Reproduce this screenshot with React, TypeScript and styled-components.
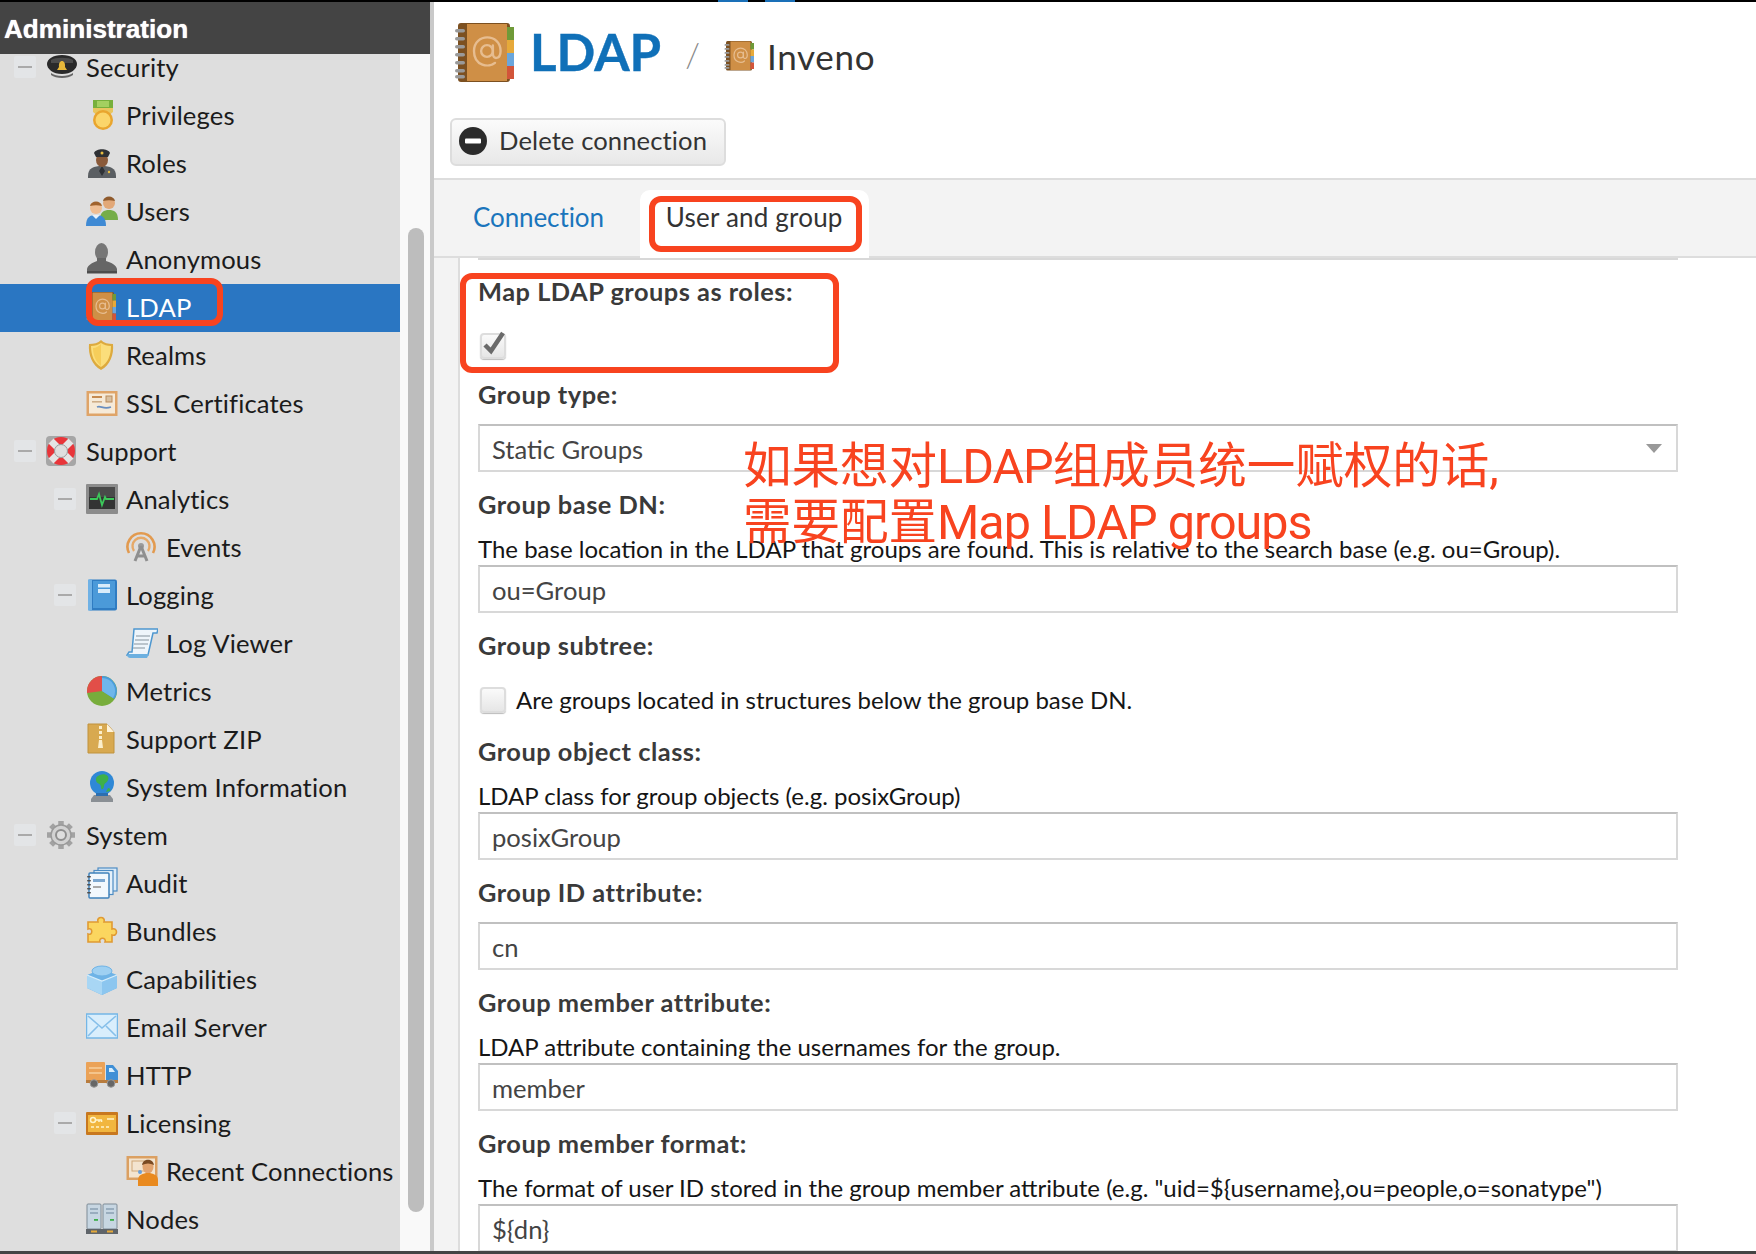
import React from "react";
import styled, { createGlobalStyle } from "styled-components";

const Global = createGlobalStyle`
  html, body { margin: 0; padding: 0; background: #fff; }
  * { box-sizing: border-box; }
`;
const FONT = `Lato, "Noto Sans", sans-serif`;
const RED = "#f8431f";

const Page = styled.div`
  position: relative; width: 1756px; height: 1254px; overflow: hidden;
  display: flex; flex-direction: column; font-family: ${FONT}; background: #fff;
`;
const TopBar = styled.div`
  height: 2px; flex: none; background: #000; display: flex; gap: 17px; padding-left: 718px;
`;
const TopMark = styled.span`
  display: block; width: 30px; height: 2px; background: #1a70b8;
`;
const BottomBar = styled.div`
  height: 3px; flex: none; background: #444;
`;
const Body = styled.div`
  flex: 1; min-height: 0; display: flex;
`;
const Side = styled.aside`
  width: 430px; flex: none; display: flex; flex-direction: column; min-height: 0;
`;
const SideHead = styled.div`
  height: 52px; flex: none; background: #444; color: #fff; padding-left: 4px;
  font: bold 26.1px/54px "Liberation Sans", sans-serif; text-shadow: 0 0 1px #fff;
`;
const SideBody = styled.div`
  flex: 1; min-height: 0; display: flex;
`;
const Tree = styled.div`
  width: 400px; flex: none; background: #dedede; overflow: hidden;
`;
const TreeInner = styled.div`
  margin-top: -10px;
`;
const Row = styled.div<{ $level: number; $sel?: boolean }>`
  height: 48px; display: flex; align-items: center; white-space: nowrap; padding-bottom: 2px;
  padding-left: ${(p) => 46 + (p.$level - 1) * 40}px;
  background: ${(p) => (p.$sel ? "#2a76c2" : "transparent")};
  color: ${(p) => (p.$sel ? "#fff" : "#1b1b1b")};
  font-size: 25.6px; letter-spacing: 0.15px;
`;
const Expander = styled.span`
  position: relative; width: 22px; height: 22px; margin-left: -32px; margin-right: 10px; flex: none;
  background: #e3e5e7; border-radius: 2px;
  &::after { content: ""; position: absolute; left: 4px; right: 4px; top: 10px; height: 2px; background: #aaa; }
`;
const IconSlot = styled.span`
  width: 32px; height: 32px; flex: none; margin-right: 8px; display: flex;
  svg { display: block; }
`;
const Track = styled.div`
  width: 30px; flex: none; background: #f9f9f9; padding: 174px 6px 0 8px;
`;
const Thumb = styled.div`
  height: 984px; background: #bdbdbd; border-radius: 8px;
`;
const Rule = styled.div`
  width: 4px; flex: none; background: #c9c9c9;
`;
const Main = styled.main`
  flex: 1; min-width: 0; display: flex; flex-direction: column; background: #fff;
`;
const TitleRow = styled.div`
  height: 116px; flex: none; display: flex; align-items: center; padding: 0 0 14px 20px;
`;
const Title = styled.h1`
  margin: 0 0 4px 12px; font: 700 51px/1 ${FONT}; color: #1070b8; letter-spacing: 0; -webkit-text-stroke: 0.4px #1070b8;
`;
const Slash = styled.span`
  margin: 0 24px 0 24px; font-size: 34px; color: #888; font-weight: 300;
`;
const SmallBook = styled.span`
  display: flex; margin-top: 6px;
`;
const Sub = styled.span`
  margin: 6px 0 0 11px; font-size: 35px; color: #333; letter-spacing: 0.7px;
`;
const Toolbar = styled.div`
  height: 60px; flex: none; padding-left: 16px;
`;
const Button = styled.div`
  width: 276px; height: 48px; display: flex; align-items: center; gap: 12px; padding: 0 0 3px 7px;
  border: 2px solid #ddd; border-radius: 6px; background: linear-gradient(#fbfbfb, #e8e8e8);
  font-size: 25.6px; color: #333; letter-spacing: 0.1px;
`;
const ButtonText = styled.span`
  margin-bottom: 2px;
`;
const TabBar = styled.div`
  height: 80px; flex: none; background: #f3f3f3; border-top: 2px solid #ddd; border-bottom: 2px solid #ddd;
  display: flex; padding: 10px 0 0 39px; gap: 36px;
`;
const Tab = styled.div<{ $active?: boolean }>`
  height: ${(p) => (p.$active ? 68 : 56)}px; padding: ${(p) => (p.$active ? "0 26px" : "0")};
  line-height: 54px; font-size: 26px; letter-spacing: ${(p) => (p.$active ? 0.2 : -0.1)}px;
  color: ${(p) => (p.$active ? "#333" : "#1a75bc")};
  background: ${(p) => (p.$active ? "#fff" : "transparent")};
  border-radius: 10px 10px 0 0; position: relative;
`;
const Content = styled.div`
  flex: 1; min-height: 0; display: flex; overflow: hidden;
`;
const Strip = styled.div`
  width: 26px; flex: none; background: #f3f3f3; border-right: 2px solid #ddd;
`;
const Form = styled.div`
  width: 1200px; flex: none; margin-left: 18px; border-top: 2px solid #d8d8d8;
`;
const Field = styled.div`
  margin-top: 19px; display: flex; flex-direction: column;
  &:first-child { margin-top: 18px; }
`;
const Label = styled.div`
  height: 30px; margin-bottom: 13px; line-height: 27px; font-size: 25.4px; letter-spacing: 0.5px; font-weight: 700; color: #3a3a3a; white-space: nowrap;
`;
const Help = styled.div`
  height: 30px; margin-bottom: 1px; line-height: 30px; font-size: 24px; color: #151515; white-space: nowrap;
`;
const Input = styled.div`
  position: relative; height: 48px; flex: none; padding-left: 12px; line-height: 46px;
  border: 2px solid #d8d8d8; border-top-color: #c0c0c0;
  font-size: 25.6px; color: #444; background: #fff;
`;
const Caret = styled.span`
  position: absolute; right: 14px; top: 18px; width: 0; height: 0;
  border-left: 8px solid transparent; border-right: 8px solid transparent; border-top: 9px solid #999;
`;
const CheckRow = styled.div<{ $top: number; $bottom: number }>`
  display: flex; align-items: center; gap: 10px; padding: ${(p) => p.$top}px 0 ${(p) => p.$bottom}px 2px;
  font-size: 24px; color: #151515;
`;
const Check = styled.span`
  position: relative; width: 26px; height: 26px; flex: none; border: 2px solid #ddd; border-radius: 4px;
  background: linear-gradient(#fafafa, #e6e6e6); box-shadow: 0 1px 1px #bbb;
  svg { position: absolute; left: -2px; top: -3px; overflow: visible; }
`;
const Frame = styled.div<{ $x: number; $y: number; $w: number; $h: number }>`
  position: absolute; left: ${(p) => p.$x}px; top: ${(p) => p.$y}px; width: ${(p) => p.$w}px; height: ${(p) => p.$h}px;
  border: 6px solid ${RED}; border-radius: 12px; pointer-events: none;
`;
const Note = styled.div`
  position: absolute; left: 743px; top: 439px; color: ${RED};
  font: 400 48.5px/56px Roboto, "Noto Sans CJK SC", sans-serif; white-space: nowrap;
`;
const NoteLatin = styled.span`
  letter-spacing: -1px;
`;

const W = ({ children }: { children: React.ReactNode }) => (
  <svg width="32" height="32" viewBox="0 0 32 32" fill="none">{children}</svg>
);

const At = ({ x, y, r, c }: { x: number; y: number; r: number; c: string }) => (
  <g fill="none" stroke={c} strokeWidth={r * 0.17} strokeLinecap="round">
    <circle cx={x} cy={y} r={r * 0.42} />
    <path d={`M${x + r * 0.42} ${y - r * 0.4}v${r * 0.6}c0 ${r * 0.45} ${r * 0.55} ${r * 0.4} ${r * 0.55} -${r * 0.2}c0 -${r * 1.3} -${r * 1.9} -${r * 1.3} -${r * 1.9} 0c0 ${r * 1.1} ${r * 1.1} ${r * 1.2} ${r * 1.5} ${r * 0.85}`} />
  </g>
);

const BookSvg = () => (
  <>
    <rect x="2" y="1" width="26" height="29.500" rx="1.500" fill="#7c5020" />
    <rect x="6.500" y="1.500" width="20" height="28.500" fill="#cf8f46" />
    <rect x="26.500" y="3" width="3.500" height="6.500" fill="#6f9a38" />
    <rect x="26.500" y="9.500" width="3.500" height="6.500" fill="#e6a93a" />
    <rect x="26.500" y="16" width="3.500" height="6.500" fill="#6aa6dc" />
    <rect x="26.500" y="22.500" width="3.500" height="6.500" fill="#d2553a" />
    {[4, 8, 12, 16, 20, 24, 27].map((y) => (
      <rect key={y} x="0.500" y={y} width="5" height="1.800" rx="0.900" fill="#9a9a9a" />
    ))}
    <At x={16.5} y={15} r={7} c="#e7bd90" />
  </>
);

const icons: Record<string, React.ReactNode> = {
  security: (
    <>
      <path d="M1 13c0-5 6-9 15-9s15 4 15 9c0 5-6 10-15 10S1 18 1 13z" fill="#2a2a2a" />
      <path d="M5 9c4-3 18-3 22 0v3H5z" fill="#4b4b4b" />
      <path d="M13 16c-1-8 7-8 6 0l2 3H11z" fill="#e7b83a" />
      <path d="M5 22c5 4 17 4 22 0v2c-5 4-17 4-22 0z" fill="#666" />
    </>
  ),
  medal: (
    <>
      <path d="M7 1h20v12l-5 4H12L7 13z" fill="#e9c65f" />
      <rect x="7" y="1" width="20" height="8" fill="#78b03c" />
      <rect x="11" y="2" width="12" height="6" fill="#a4d060" />
      <circle cx="17" cy="21" r="10" fill="#e9a52e" />
      <circle cx="17" cy="21" r="7.500" fill="#fbd56a" />
    </>
  ),
  roles: (
    <>
      <path d="M2 29c0-8 6-10 14-10s14 2 14 10v2H2z" fill="#5b5f63" />
      <path d="M16 19l-3 5 3 5 3-5z" fill="#2f3236" />
      <circle cx="23" cy="25" r="1.200" fill="#e9bd3f" />
      <ellipse cx="16" cy="13" rx="6" ry="7" fill="#8a5a3a" />
      <path d="M8 6c2-5 14-5 16 0l-2 4H10z" fill="#2e3034" />
      <circle cx="16" cy="6" r="1.500" fill="#e9bd3f" />
    </>
  ),
  users: (
    <>
      <circle cx="23" cy="8" r="6" fill="#e2a878" />
      <path d="M17 6c1-6 11-6 12 0-4-1-8-1-12 0z" fill="#8f5a2c" />
      <path d="M14 25c0-8 4-10 9-10s9 2 9 10z" fill="#76ad48" />
      <circle cx="10" cy="13" r="6" fill="#efbd92" />
      <path d="M4 11c1-6 11-6 12 0-4-1-8-1-12 0z" fill="#a0622c" />
      <path d="M0 31c0-9 4-11 10-11s10 2 10 11z" fill="#3f8ad4" />
      <path d="M6 20h8l-4 4z" fill="#e8f1fa" />
    </>
  ),
  anon: (
    <>
      <ellipse cx="15.500" cy="9" rx="6.500" ry="9" fill="#777" />
      <path d="M11 15h9v3c6 2 10 4 11 8v4H1v-4c1-4 5-6 10-8z" fill="#666" />
      <rect x="1" y="28" width="30" height="2.500" fill="#4c4c4c" />
    </>
  ),
  book: <BookSvg />,
  shield: (
    <>
      <path d="M15 1c3 3 7 4 12 4 1 11-3 21-12 26C6 26 2 16 3 5c5 0 9-1 12-4z" fill="#ddaa3e" />
      <path d="M15 4c3 2 6 3 10 3 0 9-3 17-10 21C8 24 5 16 5 7c4 0 7-1 10-3z" fill="#fbde7b" />
      <path d="M15 5v22c-5-4-8-11-8-18 3 0 6-2 8-4z" fill="#f6cd5a" />
    </>
  ),
  cert: (
    <>
      <rect x="0.500" y="4" width="31" height="25" fill="#dfa468" />
      <rect x="3" y="6.500" width="26" height="20" fill="#f6ead8" />
      <rect x="6" y="9" width="10" height="2" fill="#c58a50" />
      <rect x="20" y="9" width="6" height="6" fill="#d9c0a0" stroke="#b98b5c" />
      <path d="M11 20c4-2 6 3 14 0" stroke="#6a8fc0" strokeWidth="1.600" />
      <rect x="6" y="14" width="10" height="1.600" fill="#cfae88" />
    </>
  ),
  buoy: (
    <>
      <rect x="0" y="1" width="30" height="30" rx="4" fill="#a6a6a6" />
      <circle cx="15" cy="16" r="14" fill="#e8353a" />
      <path d="M5 6l7 7M25 6l-7 7M5 26l7-7M25 26l-7-7" stroke="#e4e4e4" strokeWidth="7" />
      <circle cx="15" cy="16" r="6.500" fill="#dedede" stroke="#999" />
    </>
  ),
  monitor: (
    <>
      <rect x="0" y="1" width="32" height="30" rx="1" fill="#8c8c8c" />
      <rect x="3" y="4" width="26" height="22" fill="#333" />
      <rect x="3" y="4" width="26" height="10" fill="#4a4a4a" />
      <path d="M4 16h7l2-5 3 11 3-8 1 2h8" stroke="#3cc75a" strokeWidth="1.800" />
    </>
  ),
  events: (
    <>
      <path d="M3 22A13.500 13.500 0 1 1 27 22" stroke="#e29a4f" strokeWidth="2.600" />
      <path d="M8 20a8.500 8.500 0 1 1 14 0" stroke="#e6a968" strokeWidth="2.400" />
      <circle cx="15" cy="15" r="3" fill="#9b9b9b" />
      <path d="M15 15l-6 15M15 15l6 15M10 25h10" stroke="#8f8f8f" strokeWidth="3" />
    </>
  ),
  logbook: (
    <>
      <rect x="2" y="0.500" width="29" height="31" rx="2" fill="#2f7cc2" />
      <rect x="2" y="0.500" width="4" height="31" fill="#6fb1e5" />
      <rect x="7" y="2" width="22" height="27" fill="#4b9ad9" />
      <rect x="12" y="5" width="12" height="9" fill="#d8ecfa" />
      <rect x="12" y="8.500" width="12" height="1.500" fill="#4b9ad9" />
    </>
  ),
  scroll: (
    <>
      <path d="M8 2h24l-1 4h-4l-5 22H1l2-3h3z" fill="#eef5fb" stroke="#4e97cf" strokeWidth="1.500" />
      <path d="M1 28c0 2 2 3 3 3h17l2-4H3z" fill="#6cb0e0" />
      <path d="M10 9h14M9 13h14M8 17h14M7 21h12" stroke="#a9b4bd" strokeWidth="1.600" />
    </>
  ),
  pie: (
    <>
      <circle cx="16" cy="16" r="15" fill="#78ad3c" />
      <path d="M16 1v15l12.500 8A15 15 0 0 0 16 1z" fill="#4a9cdc" />
      <path d="M16 1A15 15 0 0 0 1 16c0 .700 0 1 .100 2L16 16z" fill="#e24e48" />
      <path d="M16 3v13l11 7a13 13 0 0 0-11-20z" fill="#6fb6ea" />
    </>
  ),
  zip: (
    <>
      <path d="M2 1h19l7 8v21H2z" fill="#d8a950" stroke="#c0923d" />
      <path d="M21 1v8h7z" fill="#fff3d8" />
      <path d="M13 3h3v3h-3zM13 8h3v3h-3zM13 13h3v3h-3z" fill="#fbeecb" />
      <path d="M13 17h3l1 8h-5z" fill="#fbeecb" />
    </>
  ),
  globe: (
    <>
      <circle cx="16" cy="12" r="12" fill="#2f88d6" />
      <path d="M14 4c5-2 10 1 8 5-1 3-4 3-4 6s-3 5-3 1-5-3-5-7 2-4 4-5z" fill="#3eb04a" />
      <path d="M22 17c2 0 3 2 2 3l-4 1z" fill="#3eb04a" />
      <path d="M8 24h16l3 4v3H5v-3z" fill="#8a8f94" />
      <rect x="10" y="22" width="12" height="3" fill="#2c6fb0" />
    </>
  ),
  gear: (
    <>
      <g transform="translate(15 16)" stroke="#a2a2a2" strokeWidth="5.500">
        {[0, 45, 90, 135].map((a) => (
          <path key={a} d="M0 -14V14" transform={`rotate(${a})`} />
        ))}
      </g>
      <circle cx="15" cy="16" r="10" fill="#d2d2d2" stroke="#9a9a9a" strokeWidth="1.500" />
      <circle cx="15" cy="16" r="5" fill="#dedede" stroke="#8f8f8f" strokeWidth="2" />
    </>
  ),
  audit: (
    <>
      <rect x="12" y="1" width="19" height="23" fill="#dcebf7" stroke="#4d8cc4" strokeWidth="1.200" />
      <rect x="8" y="3.500" width="19" height="24" fill="#e6f1fa" stroke="#4d8cc4" strokeWidth="1.200" />
      <rect x="3" y="6" width="20" height="25" rx="1" fill="#f2f8fd" stroke="#3f81bb" strokeWidth="1.500" />
      <rect x="7" y="12" width="12" height="3" fill="#7ca7d0" />
      <rect x="7" y="19" width="8" height="2" fill="#a9a9a9" />
      {[9, 13, 17, 21, 25].map((y) => (
        <rect key={y} x="1" y={y} width="4" height="1.600" rx="0.800" fill="#4f4f4f" />
      ))}
    </>
  ),
  bundle: (
    <path d="M12 7c-2-6 8-6 6 0h8v7c6-2 6 8 0 6v7h-7c2-5-7-5-5 0H2v-8c5 2 5-7 0-5V7z" fill="#fbd65f" stroke="#e09a33" strokeWidth="1.600" />
  ),
  cap: (
    <>
      <path d="M16 6l15 6v13l-15 7-15-7V12z" fill="#6eb3e6" />
      <path d="M16 18l15-6v13l-15 7z" fill="#8cc6ef" />
      <path d="M16 18L1 12v13l15 7z" fill="#a8d6f4" />
      <ellipse cx="16" cy="8" rx="10" ry="5" fill="#9ed0f2" stroke="#6eb3e6" />
      <path d="M1 12l15 6 15-6" stroke="#d7eefb" strokeWidth="1.200" />
    </>
  ),
  mail: (
    <>
      <rect x="0.500" y="3" width="31" height="24" fill="#d9eefc" stroke="#74b6e6" strokeWidth="1.500" />
      <path d="M2 5l14 12L30 5M2 25l10-10M30 25L20 15" stroke="#86bfe9" strokeWidth="1.600" />
    </>
  ),
  truck: (
    <>
      <rect x="0" y="3" width="19" height="19" rx="1" fill="#eba257" />
      <path d="M3 9h13M3 14h13" stroke="#f7cf9d" strokeWidth="1.400" />
      <path d="M20 6h7l5 6v10H20z" fill="#3f8fd6" />
      <path d="M23 9h3l3 4h-6z" fill="#d8eefc" />
      <rect x="0" y="21" width="32" height="3" fill="#b87c3e" />
      <circle cx="8" cy="24.500" r="3.800" fill="#666" stroke="#999" />
      <circle cx="25" cy="24.500" r="3.800" fill="#666" stroke="#999" />
    </>
  ),
  license: (
    <>
      <rect x="0" y="5" width="32" height="23" rx="1" fill="#c8781f" />
      <rect x="2" y="8" width="28" height="17" fill="#f1b63f" />
      <circle cx="7" cy="13" r="2.500" stroke="#fff3c9" strokeWidth="1.500" />
      <path d="M9 13h7M13 13v2M15.500 13v2M21 12h7M5 20h3M10 20h3M15 20h3M20 20h3" stroke="#fff3c9" strokeWidth="1.600" />
    </>
  ),
  recent: (
    <>
      <rect x="0.500" y="1" width="31" height="24" fill="#dba062" />
      <rect x="3" y="3.500" width="26" height="19" fill="#f3e4cf" />
      <rect x="6" y="6" width="13" height="10" fill="none" stroke="#cfa677" />
      <ellipse cx="22" cy="12" rx="5.500" ry="6.500" fill="#e2a470" />
      <path d="M16 10c1-7 11-7 12 0-4-2-8-2-12 0z" fill="#7a4a22" />
      <path d="M12 31v-6c0-5 5-7 10-7s10 2 10 7v6z" fill="#e98a1f" />
      <circle cx="14" cy="17" r="2" fill="#6aa0d8" />
    </>
  ),
  nodes: (
    <>
      <rect x="1" y="1" width="14" height="25" rx="1" fill="#c7d6e2" stroke="#7e8b96" />
      <rect x="17" y="1" width="14" height="25" rx="1" fill="#c7d6e2" stroke="#7e8b96" />
      <path d="M4 6h8M4 10h8M20 6h8M20 10h8" stroke="#8ba0b2" strokeWidth="1.500" />
      <rect x="8" y="16" width="4" height="1.800" fill="#3cae4a" />
      <rect x="24" y="16" width="4" height="1.800" fill="#3cae4a" />
      <rect x="0" y="26" width="32" height="5" fill="#5f6469" />
      <rect x="5" y="27.500" width="6" height="2" fill="#e6a93a" />
      <rect x="21" y="27.500" width="6" height="2" fill="#e6a93a" />
    </>
  ),
};

type Item = { label: string; level: number; icon: string; exp?: boolean; sel?: boolean };
const items: Item[] = [
  { label: "Security", level: 1, icon: "security", exp: true },
  { label: "Privileges", level: 2, icon: "medal" },
  { label: "Roles", level: 2, icon: "roles" },
  { label: "Users", level: 2, icon: "users" },
  { label: "Anonymous", level: 2, icon: "anon" },
  { label: "LDAP", level: 2, icon: "book", sel: true },
  { label: "Realms", level: 2, icon: "shield" },
  { label: "SSL Certificates", level: 2, icon: "cert" },
  { label: "Support", level: 1, icon: "buoy", exp: true },
  { label: "Analytics", level: 2, icon: "monitor", exp: true },
  { label: "Events", level: 3, icon: "events" },
  { label: "Logging", level: 2, icon: "logbook", exp: true },
  { label: "Log Viewer", level: 3, icon: "scroll" },
  { label: "Metrics", level: 2, icon: "pie" },
  { label: "Support ZIP", level: 2, icon: "zip" },
  { label: "System Information", level: 2, icon: "globe" },
  { label: "System", level: 1, icon: "gear", exp: true },
  { label: "Audit", level: 2, icon: "audit" },
  { label: "Bundles", level: 2, icon: "bundle" },
  { label: "Capabilities", level: 2, icon: "cap" },
  { label: "Email Server", level: 2, icon: "mail" },
  { label: "HTTP", level: 2, icon: "truck" },
  { label: "Licensing", level: 2, icon: "license", exp: true },
  { label: "Recent Connections", level: 3, icon: "recent" },
  { label: "Nodes", level: 2, icon: "nodes" },
];

export default function App() {
  return (
    <Page>
      <Global />
      <TopBar>
        <TopMark />
        <TopMark />
      </TopBar>
      <Body>
        <Side>
          <SideHead>Administration</SideHead>
          <SideBody>
            <Tree>
              <TreeInner>
                {items.map((it) => (
                  <Row key={it.label} $level={it.level} $sel={it.sel}>
                    {it.exp && <Expander />}
                    <IconSlot>
                      <W>{icons[it.icon]}</W>
                    </IconSlot>
                    {it.label}
                  </Row>
                ))}
              </TreeInner>
            </Tree>
            <Track>
              <Thumb />
            </Track>
          </SideBody>
        </Side>
        <Rule />
        <Main>
          <TitleRow>
            <svg width="64" height="64" viewBox="0 0 32 32" fill="none">
              <BookSvg />
            </svg>
            <Title>LDAP</Title>
            <Slash>/</Slash>
            <SmallBook>
              <W>
                <BookSvg />
              </W>
            </SmallBook>
            <Sub>Inveno</Sub>
          </TitleRow>
          <Toolbar>
            <Button>
              <svg width="28" height="28" viewBox="0 0 28 28">
                <circle cx="14" cy="14" r="14" fill="#2b2b2b" />
                <rect x="6" y="11.500" width="16" height="5" rx="1" fill="#fff" />
              </svg>
              <ButtonText>Delete connection</ButtonText>
            </Button>
          </Toolbar>
          <TabBar>
            <Tab>Connection</Tab>
            <Tab $active>User and group</Tab>
          </TabBar>
          <Content>
            <Strip />
            <Form>
              <Field>
                <Label>Map LDAP groups as roles:</Label>
                <CheckRow $top={12} $bottom={3}>
                  <Check>
                    <svg width="26" height="26" viewBox="0 0 26 26" fill="none">
                      <path d="M5 13l6 6L23 1" stroke="#6a6a6a" strokeWidth="4.500" />
                    </svg>
                  </Check>
                </CheckRow>
              </Field>
              <Field>
                <Label>Group type:</Label>
                <Input>
                  Static Groups
                  <Caret />
                </Input>
              </Field>
              <Field>
                <Label>Group base DN:</Label>
                <Help>The base location in the LDAP that groups are found. This is relative to the search base (e.g. ou=Group).</Help>
                <Input>ou=Group</Input>
              </Field>
              <Field>
                <Label>Group subtree:</Label>
                <CheckRow $top={10} $bottom={5}>
                  <Check />
                  Are groups located in structures below the group base DN.
                </CheckRow>
              </Field>
              <Field>
                <Label>Group object class:</Label>
                <Help>LDAP class for group objects (e.g. posixGroup)</Help>
                <Input>posixGroup</Input>
              </Field>
              <Field>
                <Label>Group ID attribute:</Label>
                <Input>cn</Input>
              </Field>
              <Field>
                <Label>Group member attribute:</Label>
                <Help>LDAP attribute containing the usernames for the group.</Help>
                <Input>member</Input>
              </Field>
              <Field>
                <Label>Group member format:</Label>
                <Help>The format of user ID stored in the group member attribute (e.g. "uid=${"{"}username{"}"},ou=people,o=sonatype")</Help>
                <Input>${"{"}dn{"}"}</Input>
              </Field>
            </Form>
          </Content>
        </Main>
      </Body>
      <BottomBar />
      <Frame $x={86} $y={278} $w={137} $h={48} />
      <Frame $x={649} $y={196} $w={213} $h={56} />
      <Frame $x={460} $y={273} $w={379} $h={100} />
      <Note>
        如果想对<NoteLatin>LDAP</NoteLatin>组成员统一赋权的话,
        <br />
        需要配置<NoteLatin>Map LDAP groups</NoteLatin>
      </Note>
    </Page>
  );
}
